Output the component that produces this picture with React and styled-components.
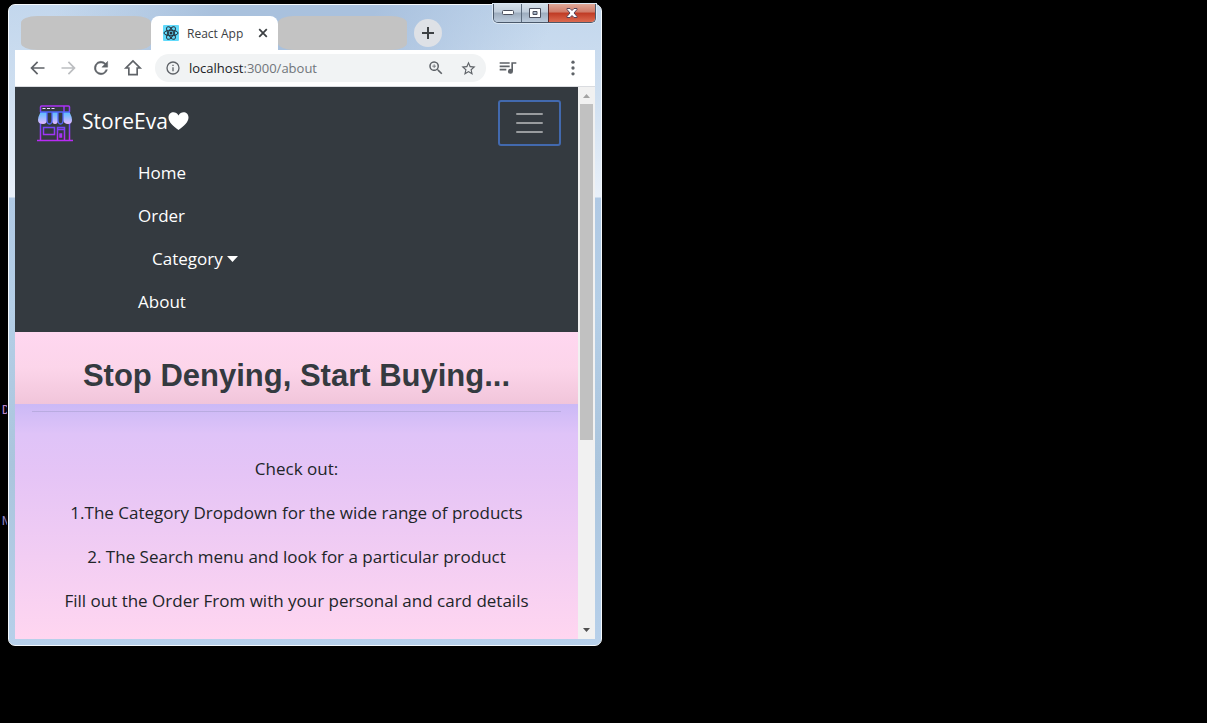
import React from "react";
import styled, { createGlobalStyle, css } from "styled-components";

const Global = createGlobalStyle`
  * { box-sizing: border-box; }
  body { margin: 0; background: #000; font-family: "Open Sans", "Noto Sans", sans-serif; }
  button { border: 0; padding: 0; background: none; font: inherit; color: inherit; }
`;

const Desktop = styled.main`
  position: relative;
  min-height: 100vh;
  padding: 4px 8px;
  background: #000;
  overflow: hidden;
`;

const Stray = styled.span`
  position: absolute;
  left: 2px;
  top: ${(p) => p.$top}px;
  font: 12px/16px "DejaVu Sans Mono", monospace;
  color: ${(p) => p.$color};
`;

const Window = styled.section`
  position: relative;
  width: 100%;
  max-width: 594px;
  padding: 0 6px 6px;
  border: 1px solid #f4f8fc;
  border-radius: 7px;
  box-shadow: 0 0 0 1px #000;
  background:
    linear-gradient(115deg, transparent 8%, #a9c1dd 34%, #a9c1de 60%, transparent 90%) 0 0 / 100% 48px no-repeat,
    linear-gradient(#c3d7ed 0, #cfdff0 90px, #e9f0f9 192px, #b0c9e4 193px, #b5cfe7 300px, #abc5dd 460px, #b7d0ea 100%);
`;

const TitleBar = styled.header`
  display: flex;
  height: 45px;
  align-items: flex-end;
  padding-left: 6px;
`;

const BlankTab = styled.div`
  width: ${(p) => p.$width}px;
  height: 34px;
  border-radius: 16px / 7px;
  background: #c3c3c3;
`;

const ActiveTab = styled.div`
  display: flex;
  width: 127px;
  height: 34px;
  align-items: center;
  padding: 0 8px 0 12px;
  border-radius: 8px 8px 0 0;
  background: #fff;
  font-size: 12px;
  color: #3c4043;
  gap: 8px;
  span { flex: 1; white-space: nowrap; }
`;

const IconButton = styled.button`
  display: grid;
  place-items: center;
  flex: none;
  width: ${(p) => p.$size || 32}px;
  height: ${(p) => p.$size || 32}px;
  color: ${(p) => p.$color || "#5f6368"};
`;

const NewTab = styled(IconButton)`
  margin: 0 0 3px 7px;
  border-radius: 50%;
  background: #dee1e6;
`;

const MenuButton = styled(IconButton)`
  margin-left: 33px;
`;

const WindowControls = styled.div`
  position: absolute;
  right: 5px;
  top: -1px;
  display: flex;
  height: 19px;
  border: 1px solid #4b596b;
  border-top: 0;
  border-radius: 0 0 5px 5px;
  overflow: hidden;
  box-shadow: 0 0 0 1px #dce8f4;
`;

const Control = styled.button`
  display: grid;
  place-items: center;
  width: ${(p) => (p.$close ? 47 : 27)}px;
  border-left: 1px solid ${(p) => (p.$close ? "#5c2727" : "#5c6b7d")};
  background: ${(p) =>
    p.$close
      ? "linear-gradient(#e0a898 0, #d07a68 45%, #bf3a24 50%, #dc6a50 100%)"
      : "linear-gradient(#d5dfe9 0, #bfccda 45%, #9dacbe 50%, #bccbdc 100%)"};
  &:first-child { border-left: 0; }
`;

const Toolbar = styled.nav`
  display: flex;
  height: 37px;
  align-items: center;
  padding: 0 6px;
  border-bottom: 1px solid #dadce0;
  background: #fff;
`;

const Address = styled.div`
  display: flex;
  flex: 1;
  height: 28px;
  align-items: center;
  margin: 0 6px;
  padding: 0 2px 0 10px;
  border-radius: 14px;
  background: #f1f3f4;
  color: #5f6368;
`;

const Url = styled.div`
  flex: 1;
  margin-left: 8px;
  font-size: 13px;
  line-height: 20px;
  color: #70757a;
  b { font-weight: 400; color: #202124; }
`;

const Viewport = styled.div`
  display: flex;
`;

const Page = styled.div`
  flex: 1;
  min-width: 0;
`;

const ScrollBar = styled.div`
  display: flex;
  flex-direction: column;
  align-items: center;
  width: 17px;
  background: #f1f1f1;
  svg { flex: none; }
`;

const Thumb = styled.div`
  width: 13px;
  height: 336px;
  margin-bottom: auto;
  background: #c1c1c1;
`;

const NavBar = styled.header`
  padding: 13px 17px 9px 22px;
  background: #343a40;
  color: #fff;
`;

const NavTop = styled.div`
  display: flex;
  justify-content: space-between;
`;

const Brand = styled.a`
  display: flex;
  align-items: center;
  height: 46px;
  color: #fff;
  text-decoration: none;
  font-size: 21px;
  line-height: 30px;
  span { margin: 0 0 5px 9px; }
`;

const Heart = styled.svg`
  margin-bottom: 4px;
`;

const Toggler = styled.button`
  display: grid;
  place-items: center;
  width: 63px;
  height: 46px;
  border: 2px solid #4269ae;
  border-radius: 3px;
`;

const NavList = styled.ul`
  margin: 5px 0 0;
  padding: 0 0 0 101px;
  list-style: none;
`;

const NavItem = styled.li`
  height: 43px;
  ${(p) => p.$inset && css`padding-left: 14px;`}
`;

const NavLink = styled.a`
  display: inline-flex;
  align-items: center;
  gap: 4px;
  color: #fff;
  font-size: 17px;
  line-height: 43px;
  text-decoration: none;
`;

const Hero = styled.div`
  padding: 23px 0 7px;
  background: linear-gradient(#ffd7f0 0, #fcd5ea 50%, #f1c5da 100%);
  h1 {
    margin: 0;
    font: bold 31px/42px "Liberation Sans", Arial, sans-serif;
    color: #343a40;
    text-align: center;
  }
`;

const Content = styled.div`
  padding: 7px 17px 8px;
  background: linear-gradient(#cbb9f6 0, #dfc3f8 30px, #e5c4f6 70px, #ffd6f0 100%);
  text-align: center;
  color: #212529;
  hr { margin: 0 0 43px; border: 0; border-top: 1px solid #b9abe0; }
  p { margin: 0 0 17px; font-size: 17px; line-height: 27px; }
`;

const Svg = ({ s = 20, children, ...rest }) => (
  <svg width={s} height={s} viewBox="0 0 24 24" fill="currentColor" aria-hidden="true" {...rest}>{children}</svg>
);

const ReactLogo = () => (
  <svg width="16" height="16" viewBox="0 0 32 32" aria-hidden="true">
    <rect width="32" height="32" rx="2" fill="#61dafb" />
    <g fill="none" stroke="#23303b" strokeWidth="2">
      <ellipse cx="16" cy="16" rx="14" ry="5.5" />
      <ellipse cx="16" cy="16" rx="14" ry="5.5" transform="rotate(60 16 16)" />
      <ellipse cx="16" cy="16" rx="14" ry="5.5" transform="rotate(120 16 16)" />
    </g>
    <circle cx="16" cy="16" r="3" fill="#23303b" />
  </svg>
);

const StoreLogo = () => (
  <svg width="36" height="37" viewBox="0 0 36 37" fill="none" aria-hidden="true">
    <defs>
      <linearGradient id="line" x1="0" y1="0" x2="0" y2="37" gradientUnits="userSpaceOnUse">
        <stop offset="0" stopColor="#b02df5" /><stop offset=".35" stopColor="#5a55f6" /><stop offset=".55" stopColor="#6a4cf8" /><stop offset=".9" stopColor="#b92bf5" />
      </linearGradient>
      <linearGradient id="awning" x1="0" y1="7" x2="0" y2="19" gradientUnits="userSpaceOnUse">
        <stop stopColor="#54bdff" /><stop offset="1" stopColor="#e4b8ff" />
      </linearGradient>
    </defs>
    <path
      d="M3.500 7V2q0-1 1-1h27q1 0 1 1V7M27 1v6M3.500 18v17M32.500 18v17M0 35.500h36M6.500 22.500h11v7h-11zM20.500 35V22.500h7V35M20.500 24.500h7M23 29h1.500v3H23z"
      stroke="url(#line)"
      strokeWidth="1.500"
    />
    <path d="M5.500 3.500h3m1.500 0h3m1.500 0h3" stroke="#f0dcff" strokeWidth="1.200" />
    <path d="M3.500 7H10v8q0 4-4 4-5 0-5-4 0-3 2.500-8zM15 7h6v8q0 4-3 4t-3-4zM26 7h6.500q2.500 5 2.500 8 0 4-4 4t-5-4z" fill="url(#awning)" />
    <path d="M3 7h30M10 7v8q0 4 2.500 4T15 15V7M21 7v8q0 4 2.500 4T26 15V7" stroke="#5164fa" strokeWidth="1.300" />
  </svg>
);

export default function App() {
  return (
    <>
      <Global />
      <Desktop>
        <Stray $top={402} $color="#bd86c9">D</Stray>
        <Stray $top={513} $color="#8f84c4">N</Stray>
        <Window>
          <WindowControls>
            <Control aria-label="Minimize"><svg width="12" height="6"><rect x=".5" y=".5" width="11" height="4" rx="1" fill="#fff" stroke="#4b4f5d" /></svg></Control>
            <Control aria-label="Maximize"><svg width="12" height="10"><path d="M.5.5h11v9H.500zM4 3.500v3h4v-3z" fill="#fff" fillRule="evenodd" stroke="#4b4f5d" /></svg></Control>
            <Control $close aria-label="Close"><svg width="12" height="10" viewBox="0 0 12 10"><path d="M1 .5h3L6 2.500 8 .5h3v1L8 5l3 3.500v1H8L6 7.500 4 9.500H1v-1L4 5 1 1.500z" fill="#fff" stroke="#54435a" /></svg></Control>
          </WindowControls>
          <TitleBar>
            <BlankTab $width={130} />
            <ActiveTab>
              <ReactLogo />
              <span>React App</span>
              <IconButton $size={14} $color="#3c4043" aria-label="Close tab"><Svg s={14}><path d="M5.500 5.500l13 13M18.500 5.500l-13 13" stroke="currentColor" strokeWidth="3" /></Svg></IconButton>
            </ActiveTab>
            <BlankTab $width={129} />
            <NewTab $size={28} $color="#3c4043" aria-label="New tab"><Svg s={16}><path d="M12 3v18M3 12h18" stroke="currentColor" strokeWidth="3" /></Svg></NewTab>
          </TitleBar>
          <Toolbar>
            <IconButton aria-label="Back"><Svg s={20}><path d="M21 11H7.830l5.590-5.590L12 4l-8 8 8 8 1.410-1.410L7.830 13H21z" /></Svg></IconButton>
            <IconButton $color="#bcbec1" aria-label="Forward"><Svg s={20}><path d="M12 4l-1.410 1.410L16.170 11H3v2h13.170l-5.580 5.590L12 20l8-8z" /></Svg></IconButton>
            <IconButton aria-label="Reload"><Svg s={20}><path d="M17.650 6.350A8 8 0 1 0 19.730 14h-2.080A6 6 0 1 1 12 6c1.660 0 3.140.69 4.220 1.780L13 11h7V4z" stroke="currentColor" strokeWidth=".5" /></Svg></IconButton>
            <IconButton aria-label="Home page"><Svg><path d="M12 3.500L3.500 12H7v8h10v-8h3.500z" fill="none" stroke="currentColor" strokeWidth="2" /></Svg></IconButton>
            <Address>
              <Svg s={16}><path d="M11 7h2v2h-2zm0 4h2v6h-2zm1-9a10 10 0 1 0 0 20 10 10 0 0 0 0-20zm0 18a8 8 0 1 1 0-16 8 8 0 0 1 0 16z" /></Svg>
              <Url><b>localhost</b>:3000/about</Url>
              <IconButton aria-label="Zoom"><Svg s={18}><path d="M15.500 14h-.79l-.28-.27A6.500 6.500 0 1 0 13.730 14.430l.27.28v.79l5 4.990L20.490 19zM9.500 14a4.500 4.500 0 1 1 0-9 4.500 4.500 0 0 1 0 9zM9 7h1v2h2v1h-2v2H9v-2H7V9h2z" /></Svg></IconButton>
              <IconButton aria-label="Bookmark"><Svg s={17}><path d="M22 9.240l-7.190-.62L12 2 9.190 8.630 2 9.240l5.460 4.730L5.820 21 12 17.270 18.180 21l-1.630-7.030zM12 15.400l-3.760 2.270 1-4.280-3.320-2.880 4.380-.38L12 6.100l1.710 4.040 4.380.38-3.320 2.880 1 4.280z" /></Svg></IconButton>
            </Address>
            <IconButton aria-label="Media"><Svg><path d="M2 5h12v2H2zm0 4h12v2H2zm0 4h8v2H2zM16 5h6v2h-4v9a3 3 0 1 1-2-2.820z" /></Svg></IconButton>
            <MenuButton aria-label="Menu"><Svg><circle cx="12" cy="5" r="2" /><circle cx="12" cy="12" r="2" /><circle cx="12" cy="19" r="2" /></Svg></MenuButton>
          </Toolbar>
          <Viewport>
            <Page>
              <NavBar>
                <NavTop>
                  <Brand href="#">
                    <StoreLogo />
                    <span>StoreEva</span>
                    <Heart width="21" height="20" viewBox="0 0 21 20" aria-hidden="true"><path d="M10.500 19C5 15 .5 11 .5 6.500c0-6 7.500-7 10-2C13-.5 20.500.5 20.500 6.500c0 4.500-4.500 8.500-10 12.500z" fill="#fff" /></Heart>
                  </Brand>
                  <Toggler aria-label="Toggle navigation">
                    <svg width="27" height="22" viewBox="0 0 27 22" stroke="#999c9f" strokeWidth="2" strokeLinecap="round"><path d="M1 2h25M1 11h25M1 20h25" /></svg>
                  </Toggler>
                </NavTop>
                <NavList>
                  <NavItem><NavLink href="#">Home</NavLink></NavItem>
                  <NavItem><NavLink href="#">Order</NavLink></NavItem>
                  <NavItem $inset><NavLink href="#">Category<svg width="11" height="6"><path d="M0 0h11L5.500 6z" fill="#fff" /></svg></NavLink></NavItem>
                  <NavItem><NavLink href="#">About</NavLink></NavItem>
                </NavList>
              </NavBar>
              <Hero><h1>Stop Denying, Start Buying...</h1></Hero>
              <Content>
                <hr />
                <p>Check out:</p>
                <p>1.The Category Dropdown for the wide range of products</p>
                <p>2. The Search menu and look for a particular product</p>
                <p>Fill out the Order From with your personal and card details</p>
              </Content>
            </Page>
            <ScrollBar>
              <svg width="17" height="17"><path d="M5 11h7L8.500 7z" fill="#a3a3a3" /></svg>
              <Thumb />
              <svg width="17" height="17"><path d="M5 6h7l-3.500 4z" fill="#505050" /></svg>
            </ScrollBar>
          </Viewport>
        </Window>
      </Desktop>
    </>
  );
}
